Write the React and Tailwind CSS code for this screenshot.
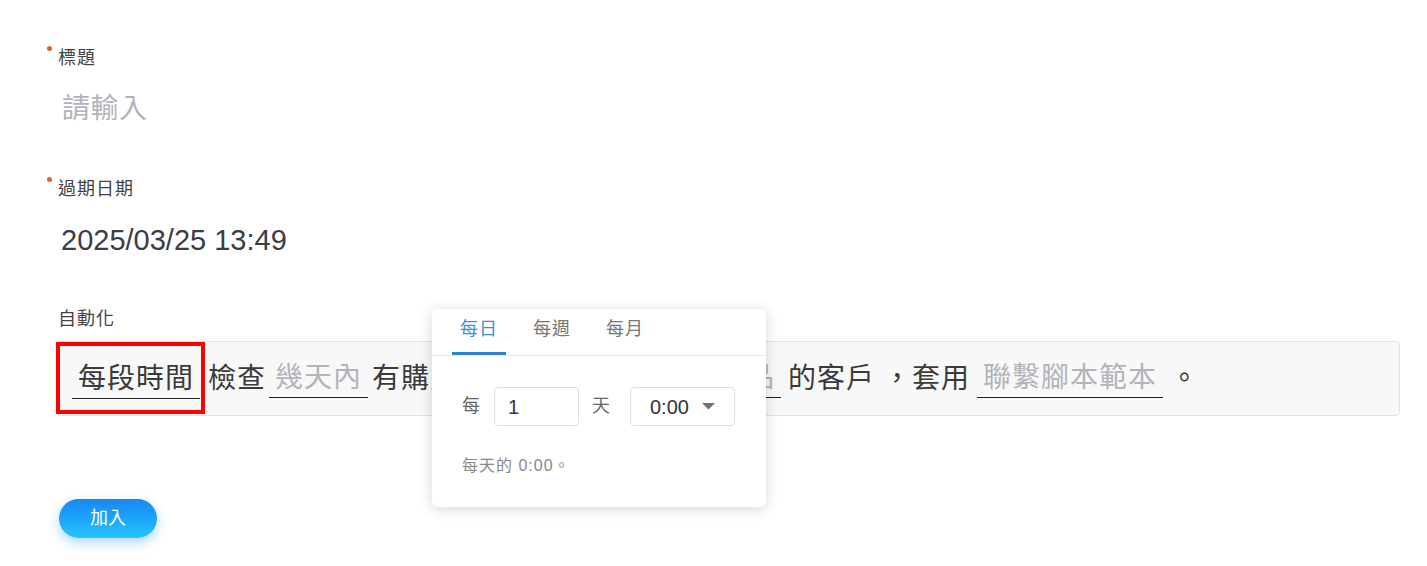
const FONT = "font-['Liberation_Sans','Noto_Sans_CJK_TC',sans-serif]";

function Label({ children, required }) {
  return (
    <div className="flex items-start">
      {required ? (
        <span className="w-[5px] h-[5px] rounded-full bg-[#d9662a] mr-[6px]" />
      ) : (
        <span className="w-[11px]" />
      )}
      <span className="text-[18px] leading-[24px] tracking-[1px] text-[#444]">{children}</span>
    </div>
  );
}

function Token({ children, placeholder, className = '' }) {
  return (
    <span
      className={`inline-block border-b border-[#222] leading-[38px] px-[6px] ${
        placeholder ? 'text-[#b3b3bb]' : 'text-[#3a3a3a]'
      } ${className}`}
    >
      {children}
    </span>
  );
}

function Tab({ children, active }) {
  return (
    <div
      className={`h-[46px] px-[8px] pb-[3px] flex items-center text-[18px] tracking-[1px] border-b-[3px] ${
        active ? 'text-[#3d8fd6] border-[#2d83d2]' : 'text-[#777] border-transparent'
      }`}
    >
      {children}
    </div>
  );
}

function Popover() {
  return (
    <div className="absolute left-[432px] top-[309px] w-[334px] h-[198px] bg-white rounded-[6px] shadow-[0_2px_14px_rgba(0,0,0,0.16)]">
      {/* Tabs */}
      <div className="flex gap-[19px] h-[47px] pl-[20px] border-b border-[#e8e8ea]">
        <Tab active>每日</Tab>
        <Tab>每週</Tab>
        <Tab>每月</Tab>
      </div>

      {/* Body */}
      <div className="px-[30px] pt-[31px]">
        <div className="flex items-center h-[39px]">
          <span className="text-[18px] text-[#666]">每</span>
          <div className="ml-[14px] w-[85px] h-[39px] border border-[#dcdfe6] rounded-[4px] flex items-center pl-[13px] text-[20px] text-[#333]">
            1
          </div>
          <span className="ml-[13px] text-[18px] text-[#666]">天</span>
          <div className="ml-[20px] w-[105px] h-[39px] border border-[#dcdfe6] rounded-[4px] flex items-center pl-[19px] text-[20px] text-[#333]">
            0:00
            <svg className="ml-[13px]" width="13" height="7" viewBox="0 0 13 7">
              <path d="M0 0 L13 0 L6.5 6.5 Z" fill="#707070" />
            </svg>
          </div>
        </div>
        <div className="mt-[29px] text-[16px] leading-[22px] tracking-[1px] text-[#888]">每天的 0:00。</div>
      </div>
    </div>
  );
}

export default function App() {
  return (
    <div className={`relative w-[1427px] h-[566px] bg-white overflow-hidden ${FONT}`}>
      <div className="pl-[47px] pt-[46px]">
        {/* 標題 */}
        <Label required>標題</Label>
        <div className="mt-[15px] pl-[15px] h-[48px] leading-[48px] text-[28px] tracking-[0.5px] text-[#b3b3bb]">請輸入</div>

        {/* 過期日期 */}
        <div className="mt-[44px]">
          <Label required>過期日期</Label>
        </div>
        <div className="mt-[15px] pl-[14px] h-[48px] leading-[48px] text-[29px] text-[#3c3c44]">2025/03/25 13:49</div>

        {/* 自動化 */}
        <div className="mt-[43px]">
          <Label>自動化</Label>
        </div>
        <div className="mt-[10px] ml-[10px] w-[1343px] h-[75px] bg-[#f8f8f8] border border-[#e2e2e2] rounded-[4px] flex items-center pl-[14px] text-[28px] tracking-[1px] text-[#3a3a3a]">
          <span className="relative">
            <Token>每段時間</Token>
            <span className="absolute left-[-16px] right-[-5px] top-[-16px] bottom-[-14px] border-[4px] border-[#f00]" />
          </span>
          <span className="ml-[8px]">檢查</span>
          <Token placeholder className="ml-[3px]">幾天內</Token>
          <span className="ml-[4px]">有購買以下任一</span>
          <Token placeholder className="ml-[20px]">指定類別商品</Token>
          <span className="ml-[7px]">的客戶</span>
          <span className="ml-[8px]">，套用</span>
          <Token placeholder className="ml-[7px]">聯繫腳本範本</Token>
          <span className="ml-[7px]">。</span>
        </div>

        {/* 加入 */}
        <button className="mt-[83px] ml-[12px] w-[98px] h-[39px] rounded-full bg-gradient-to-b from-[#1b86f5] to-[#27c3fd] text-white text-[18px] shadow-[0_5px_12px_rgba(30,150,250,0.35)]">
          加入
        </button>
      </div>

      <Popover />
    </div>
  );
}
